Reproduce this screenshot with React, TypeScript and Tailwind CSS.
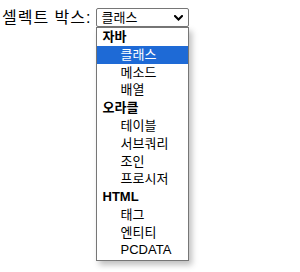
const GROUPS = [
  { label: '자바', options: ['클래스', '메소드', '배열'] },
  { label: '오라클', options: ['테이블', '서브쿼리', '조인', '프로시저'] },
  { label: 'HTML', options: ['태그', '엔티티', 'PCDATA'] },
];

const FONT = "font-['Liberation_Sans','Noto_Sans_CJK_KR',sans-serif]";

const Chevron = () => (
  <svg width="9" height="6" viewBox="0 0 9 6" fill="none">
    <path d="M1 1l3.5 3.5L8 1" stroke="#000" strokeWidth="2" strokeLinecap="square" />
  </svg>
);

export default function App() {
  const selected = '클래스';

  return (
    <div className={`w-[300px] h-[272px] bg-white text-black ${FONT}`}>
      <div className="flex items-center pl-[2px] pt-[8px]">
        <span className="text-[16px] leading-[19px] tracking-[1px]">셀렉트 박스:</span>
        <div className="relative ml-[4px]">
          <div className="w-[93px] h-[19px] border border-[#767676] rounded-[2px] flex items-center justify-between pl-[5px] pr-[5px] text-[13px] leading-none">
            <span>{selected}</span>
            <Chevron />
          </div>

          {/* open list */}
          <div className="absolute left-0 top-[19px] w-[93px] h-[234px] bg-white border border-[#767676] shadow-[3px_4px_6px_rgba(0,0,0,0.25)] flex flex-col text-[13px]">
            {GROUPS.map((g) => (
              <div key={g.label} className="flex flex-col">
                <div className="h-[17.77px] flex items-center pl-[6px] font-bold">{g.label}</div>
                {g.options.map((o) => (
                  <div
                    key={o}
                    className={`h-[17.77px] flex items-center pl-[24px] ${
                      o === selected ? 'bg-[#1e6ad6] text-white' : ''
                    }`}
                  >
                    {o}
                  </div>
                ))}
              </div>
            ))}
          </div>
        </div>
      </div>
    </div>
  );
}
